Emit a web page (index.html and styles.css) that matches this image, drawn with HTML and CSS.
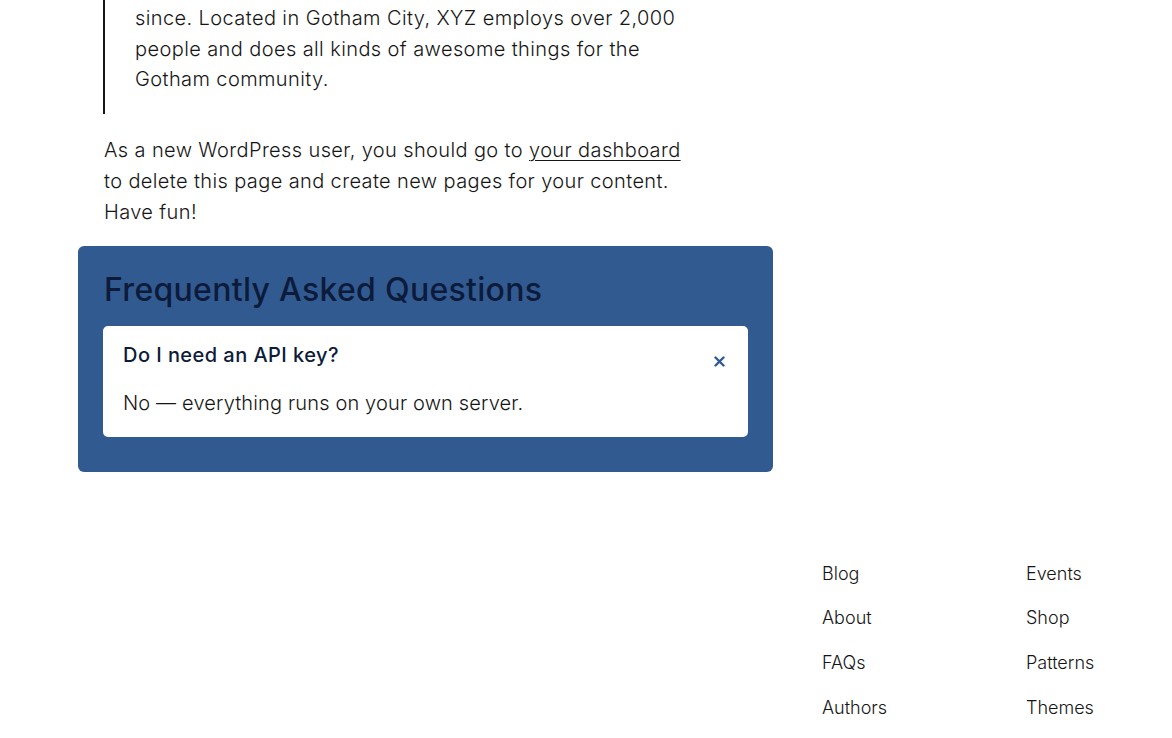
FILE: index.html
```html
<!DOCTYPE html>
<html lang="en">
<head>
    <meta charset="UTF-8">
    <meta name="viewport" content="width=device-width, initial-scale=1.0">
    <title>Sample Page</title>
    <link rel="stylesheet" href="styles.css">
</head>
<body>

    <main class="content">
        <!-- Cita de la empresa -->
        <blockquote class="quote">
            <p>since. Located in Gotham City, XYZ employs over 2,000 people and does all kinds of awesome things for the Gotham community.</p>
        </blockquote>

        <p class="intro">As a new WordPress user, you should go to <a href="#">your dashboard</a> to delete this page and create new pages for your content. Have fun!</p>

        <!-- Bloque de preguntas frecuentes -->
        <section class="faq">
            <h2>Frequently Asked Questions</h2>
            <div class="faq-item">
                <div class="faq-question">
                    <h3>Do I need an API key?</h3>
                    <svg class="faq-toggle" width="11" height="11" viewBox="0 0 11 11">
                        <path d="M1.5 1.5 L9.5 9.5 M9.5 1.5 L1.5 9.5" stroke="#315a91" stroke-width="2.4" stroke-linecap="round"/>
                    </svg>
                </div>
                <p class="faq-answer">No — everything runs on your own server.</p>
            </div>
        </section>
    </main>

    <footer class="footer">
        <ul class="footer-links">
            <li><a href="#">Blog</a></li>
            <li><a href="#">Events</a></li>
            <li><a href="#">About</a></li>
            <li><a href="#">Shop</a></li>
            <li><a href="#">FAQs</a></li>
            <li><a href="#">Patterns</a></li>
            <li><a href="#">Authors</a></li>
            <li><a href="#">Themes</a></li>
        </ul>
    </footer>

</body>
</html>
```

FILE: styles.css
```css
body {
    font-family: Inter, "Open Sans", sans-serif;
    font-weight: 300;
    color: #161616;
    background-color: #fff;
    margin: 0;
    padding: 0;
    overflow: hidden;
}
.content {
    width: 695px;
    margin-left: 78px;
}
.quote {
    margin: 0 0 0 25px;
    padding: 3px 0 19px 30px;
    border-left: 2px solid #161616;
    width: 555px;
}
.quote p {
    margin: 0;
    font-size: 20px;
    line-height: 30.5px;
    letter-spacing: 0.4px;
}
.intro {
    margin: 21px 0 18px 26px;
    width: 600px;
    font-size: 20px;
    line-height: 31px;
    letter-spacing: 0.38px;
}
.intro a {
    color: #161616;
    text-decoration-thickness: 1px;
    text-underline-offset: 3px;
}
.faq {
    background-color: #315a91;
    border-radius: 6px;
    padding: 23px 25px 35px 25px;
}
.faq h2 {
    margin: 0 0 15px 1px;
    font-size: 32px;
    font-weight: 500;
    line-height: 42px;
    color: #0d1b3a;
    letter-spacing: 0.3px;
}
.faq-item {
    background-color: #fff;
    border-radius: 5px;
    padding: 14px 20px 19px 20px;
}
.faq-question {
    display: flex;
    justify-content: space-between;
    align-items: flex-start;
}
.faq-question h3 {
    margin: 0;
    font-size: 20px;
    font-weight: 500;
    line-height: 30px;
    color: #0d1b3a;
    letter-spacing: 0.45px;
}
.faq-toggle {
    margin-right: 3px;
    margin-top: 16px;
}
.faq-answer {
    margin: 18px 0 0 0;
    font-size: 20px;
    line-height: 30px;
    letter-spacing: 0.15px;
}
.footer {
    display: flex;
    justify-content: flex-end;
    margin-top: 89px;
}
.footer-links {
    list-style: none;
    margin: 0 40px 0 0;
    padding: 0;
    display: grid;
    grid-template-columns: 204px 106px;
    row-gap: 18.3px;
}
.footer-links a {
    font-size: 18px;
    line-height: 26.5px;
    color: #161616;
    text-decoration: none;
}
```
